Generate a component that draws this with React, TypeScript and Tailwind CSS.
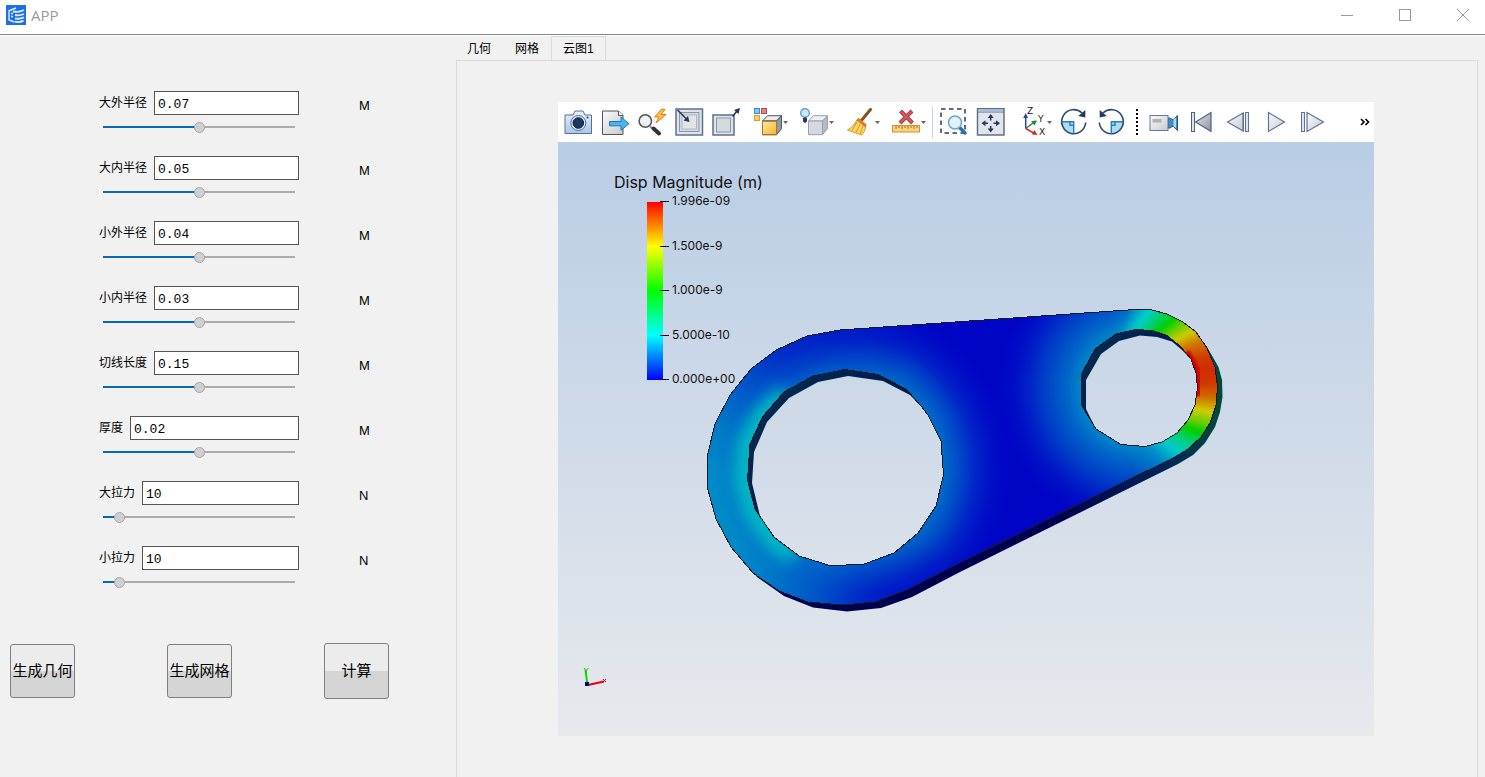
import React, { useState } from "react";

type Field = { id: string; label: string; value: string; unit: string; position: number };

const FIELDS: Field[] = [
  { id: "outer-large", label: "大外半径", value: "0.07", unit: "M", position: 50 },
  { id: "inner-large", label: "大内半径", value: "0.05", unit: "M", position: 50 },
  { id: "outer-small", label: "小外半径", value: "0.04", unit: "M", position: 50 },
  { id: "inner-small", label: "小内半径", value: "0.03", unit: "M", position: 50 },
  { id: "tangent", label: "切线长度", value: "0.15", unit: "M", position: 50 },
  { id: "thickness", label: "厚度", value: "0.02", unit: "M", position: 50 },
  { id: "force-large", label: "大拉力", value: "10", unit: "N", position: 6 },
  { id: "force-small", label: "小拉力", value: "10", unit: "N", position: 6 },
];

function ParameterRow({ field }: { field: Field }) {
  const [text, setText] = useState(field.value);
  const [pos, setPos] = useState(field.position);
  return (
    <div className="flex h-[65px] gap-[60px] pl-[99px]">
      <div className="w-[200px]">
        <div className="flex h-6 items-center gap-[7px]">
          <label htmlFor={field.id} className="shrink-0 text-xs">
            {field.label}
          </label>
          <input
            id={field.id}
            value={text}
            onChange={(e) => setText(e.target.value)}
            className="h-6 min-w-0 flex-1 border border-[#555] bg-white px-[3px] pt-0.5 font-['Liberation_Mono',monospace] text-[13px] outline-none"
          />
        </div>
        <input
          type="range"
          aria-label={field.label}
          min={0}
          max={100}
          value={pos}
          onChange={(e) => setPos(Number(e.target.value))}
          style={{
            backgroundImage: `linear-gradient(to right, #0a68b8 ${pos}%, #ababab ${pos}%)`,
          }}
          className="mx-1 mt-[7px] block h-[11px] w-48 appearance-none bg-[length:100%_2px] bg-[position:0_4px] bg-no-repeat [&::-webkit-slider-thumb]:size-[11px] [&::-webkit-slider-thumb]:appearance-none [&::-webkit-slider-thumb]:rounded-full [&::-webkit-slider-thumb]:border [&::-webkit-slider-thumb]:border-[#a6a6a6] [&::-webkit-slider-thumb]:bg-[#d0d0d0]"
        />
      </div>
      <span className="pt-[5px] text-[13px] leading-5">{field.unit}</span>
    </div>
  );
}

const NAVY = "#26375f";
const STEEL = "#5f6f8c";

const Icon = ({ children }: { children: React.ReactNode }) => (
  <svg viewBox="0 0 28 28" className="h-7 w-7 shrink-0 overflow-visible" fill="none" aria-hidden="true">
    {children}
  </svg>
);

const CameraIcon = () => (
  <Icon>
    <path d="M1 7h8l2-4h8l2 4h6.500v18.500H1z" fill="url(#skyFill)" stroke="#56709a" strokeLinejoin="round" />
    <circle cx="14.300" cy="15" r="7.500" fill="#dfe9f4" stroke="#56709a" />
    <circle cx="14.300" cy="15" r="5.300" fill="#1c3764" stroke="#0f2246" />
    <circle cx="23.500" cy="9.500" r="1" fill="#26375f" />
  </Icon>
);
const ExportIcon = () => (
  <Icon>
    <path d="M1.500 3h16l4.500 4.500V26.500H1.500z" fill="url(#grayFill)" stroke="#555" />
    <path d="M17.500 3v4.500H22" stroke="#555" fill="#fff" />
    <path d="M8.500 13.500H20V9l8 6.700-8 6.600v-4.500H8.500z" fill="#4bb4ea" stroke="#1b78b8" />
  </Icon>
);
const QuickZoomIcon = () => (
  <Icon>
    <path d="M12 18.500l4 3" stroke="#888" strokeWidth="2" />
    <path d="M15.500 20.500l5.500 5" stroke="#333" strokeWidth="4" strokeLinecap="round" />
    <circle cx="7.300" cy="13" r="6.200" fill="#eef1f5" stroke="#555" strokeWidth="1.500" />
    <path d="M24 1l-7.500 8h4.500l-3 6 10-8.500h-5L27 1.500z" fill="#ffc246" stroke="#e07a18" strokeLinejoin="round" />
  </Icon>
);
const FitWindowIcon = () => (
  <Icon>
    <rect x="1" y="1" width="26.500" height="26" fill="#dfe3ea" stroke={STEEL} strokeWidth="1.500" />
    <rect x="4.500" y="4.500" width="19.500" height="19" fill="#d3d6dc" stroke="#8a96aa" />
    <rect x="7" y="7" width="14.500" height="14" fill="#e2e4e8" stroke="#b0b8c6" />
    <path d="M2.500 2l9 9" stroke={NAVY} strokeWidth="1.600" />
    <path d="M14.500 14l-6-1.500 4.500-4.500z" fill={NAVY} />
  </Icon>
);
const ResizeIcon = () => (
  <Icon>
    <rect x="1" y="7" width="21" height="20" fill="#dfe3ea" stroke={STEEL} strokeWidth="1.500" />
    <rect x="4.500" y="10" width="14" height="14" fill="#d6d9de" stroke="#8a96aa" />
    <path d="M20.500 8.500l5-6" stroke={NAVY} strokeWidth="1.600" />
    <path d="M28 0l-1.500 6-4.500-4z" fill={NAVY} />
  </Icon>
);
const Cube = ({ front, top, side, stroke }: { front: string; top: string; side: string; stroke: string }) => (
  <g stroke={stroke} strokeLinejoin="round">
    <path d="M8.500 13l5-5.300h14l-5 5.300z" fill={top} />
    <path d="M22.500 13l5-5.300v13l-5 6z" fill={side} />
    <rect x="8.500" y="13" width="14" height="13.700" fill={front} />
  </g>
);
const ColorCubeIcon = () => (
  <Icon>
    <rect x=".5" y=".5" width="5" height="5" fill="#7ccbf2" stroke="#2f8fcb" />
    <rect x="7.500" y=".5" width="5" height="5" fill="#e0868b" stroke="#b8474f" />
    <rect x=".5" y="7.500" width="5" height="5" fill="#ffcf7a" stroke="#e39a2d" />
    <Cube front="url(#goldFill)" top="#e8ecf2" side="#8d98aa" stroke="#4a5570" />
    <rect x="8.500" y="13" width="14" height="13.700" stroke="#b5761c" />
  </Icon>
);
const LightCubeIcon = () => (
  <Icon>
    <Cube front="#d4d9df" top="#eff1f4" side="#b3bac4" stroke="#98a1ae" />
    <circle cx="5" cy="5" r="4.300" fill="#cfe8f8" stroke="#5d9fd0" strokeWidth="1.400" />
    <path d="M3.500 10h3v3.500l-1.500 1-1.500-1z" fill="#26375f" stroke="#26375f" />
  </Icon>
);
const BroomIcon = () => (
  <Icon>
    <path d="M24.500 1.500L15 13" stroke="#8e4e20" strokeWidth="3" strokeLinecap="round" />
    <path d="M11 11.500c-2 4.500-5 8-9.500 10.500L15.500 27c3-3 4-5.500 4-9z" fill="#ffd765" stroke="#d99425" strokeLinejoin="round" />
    <path d="M11 14L6 22.500M14 16l-4 8.500M17 18l-3 8" stroke="#d99425" />
    <path d="M11.500 11l8.500 7" stroke="#e07a2d" strokeWidth="3" />
  </Icon>
);
const RulerIcon = () => (
  <Icon>
    <path d="M8.500 3l12 12M20 3L8 15" stroke="#a83a40" strokeWidth="4" />
    <path d="M9 3.500l11 11M19.500 3.500l-11 11" stroke="#d4585c" strokeWidth="2" />
    <rect x=".5" y="17.500" width="27" height="6.500" fill="#ffd37d" stroke="#d98f2a" />
    <path d="M4 18v3M7 18v2M10 18v3M13 18v2M16 18v3M19 18v2M22 18v3M25 18v2" stroke="#a9681c" />
  </Icon>
);
const BoxZoomIcon = () => (
  <Icon>
    <rect x="2" y="1" width="24" height="24" stroke={NAVY} strokeWidth="1.500" strokeDasharray="4.500 3.500" />
    <path d="M20.500 19.500l5.500 5.500" stroke="#2a72ae" strokeWidth="3.500" strokeLinecap="round" />
    <circle cx="16" cy="14.500" r="6.500" fill="#e2f2fb" stroke="#6fa3cb" strokeWidth="1.500" />
  </Icon>
);
const PanIcon = () => (
  <Icon>
    <rect x="1.500" y=".7" width="26.500" height="26.300" fill="#e1e4ea" stroke={STEEL} strokeWidth="1.500" />
    <path d="M2 4h26" stroke={STEEL} />
    <rect x="2.500" y="1.500" width="24.500" height="2" fill="#a8c0e0" />
    <path d="M14.700 9v3.500M14.700 18v3.500M8.500 15.300H12M17.500 15.300H21" stroke={NAVY} strokeWidth="1.500" />
    <path d="M14.700 6l3 4h-6zM14.700 24.500l3-4h-6zM5.500 15.300l4-3v6zM24 15.300l-4-3v6z" fill={NAVY} />
  </Icon>
);
const AxesIcon = () => (
  <Icon>
    <path d="M7.700 20.500V9" stroke="#2c44a0" strokeWidth="1.500" />
    <path d="M7.700 5l2.500 5h-5z" fill="#2c44a0" />
    <path d="M7.700 20.500l8-6" stroke="#1e8a3c" strokeWidth="1.500" />
    <path d="M19 12.500l-2.500 5-3.500-4.500z" fill="#1e8a3c" />
    <path d="M7.700 20.500l8 4.500" stroke="#dc2626" strokeWidth="1.500" />
    <path d="M19.500 27l-5.500-.5 2.500-4.500z" fill="#dc2626" />
    <g fill="#222" className="font-['DejaVu_Sans',sans-serif] text-[9px]">
      <text x="9" y="6">Z</text>
      <text x="20" y="14">Y</text>
      <text x="21" y="27">X</text>
    </g>
  </Icon>
);
const Rotate = () => (
  <>
    <path d="M2.700 13.700h12v12a12 12 0 0 1-12-12z" fill="#a8def5" />
    <path d="M23 5A12 12 0 1 0 26.700 14.500" stroke="#2f4775" strokeWidth="1.600" />
    <path d="M2.700 13.700h12v12M11 13.700v3.500h3.700" stroke="#2a7db5" strokeWidth="1.400" />
    <path d="M26.300 2v7.500l-7-1.500z" fill={NAVY} />
  </>
);
const RotateCwIcon = () => (
  <Icon>
    <Rotate />
  </Icon>
);
const RotateCcwIcon = () => (
  <Icon>
    <g transform="matrix(-1 0 0 1 30 0)">
      <Rotate />
    </g>
  </Icon>
);
const VideoIcon = () => (
  <Icon>
    <path d="M19 10h2l3 2 4.500-4.500v15L24 18l-3 2h-2z" fill="#3b8fc4" stroke="#28557f" />
    <path d="M24.500 11l2.500-1v10l-2.500-1.500z" fill="#a9ddf5" />
    <rect x="1" y="7.500" width="18" height="15" fill="url(#grayFill)" stroke="#6678a0" />
    <rect x="3.500" y="11" width="9" height="3.500" fill="#b0b2b6" />
  </Icon>
);
const FirstIcon = () => (
  <Icon>
    <rect x="5.500" y="4.500" width="3" height="19" fill="#dfe3ea" stroke="#4d6188" />
    <path d="M25 4.500v19L9.500 14z" fill="url(#darkFill)" stroke="#4d6188" strokeWidth="1.200" />
  </Icon>
);
const PrevIcon = () => (
  <Icon>
    <path d="M20 5v18L4.500 14z" fill="url(#grayFill)" stroke="#5f719a" strokeWidth="1.200" />
    <rect x="22.500" y="4.500" width="3" height="19" fill="#dfe3ea" stroke="#5f719a" />
    <path d="M20.500 4.500v19" stroke="#5f719a" />
  </Icon>
);
const PlayIcon = () => (
  <Icon>
    <path d="M8.500 4.500v19L24.500 14z" fill="url(#grayFill)" stroke="#5f719a" strokeWidth="1.200" />
  </Icon>
);
const NextIcon = () => (
  <Icon>
    <rect x="4.500" y="4.500" width="3" height="19" fill="#dfe3ea" stroke="#5f719a" />
    <path d="M10 4.500v19L26.500 14z" fill="url(#grayFill)" stroke="#5f719a" strokeWidth="1.200" />
  </Icon>
);

const Tool = ({ name, children }: { name: string; children: React.ReactNode }) => (
  <button type="button" aria-label={name} className="flex h-10 w-[37px] shrink-0 items-center pl-1">
    {children}
  </button>
);
const MenuTool = ({ name, children }: { name: string; children: React.ReactNode }) => (
  <button type="button" aria-label={name} className="flex h-10 w-[46px] shrink-0 items-center gap-px pl-[9px]">
    {children}
    <svg viewBox="0 0 5 3" className="h-[3px] w-[5px] shrink-0" aria-hidden="true">
      <path d="M0 0h5L2.500 3z" fill="#666" />
    </svg>
  </button>
);

function Toolbar() {
  return (
    <div role="toolbar" className="flex h-10 items-center bg-white pr-1 pl-0.5">
      <svg className="absolute h-0 w-0" aria-hidden="true">
        <defs>
          <linearGradient id="skyFill" x2="0" y2="1">
            <stop stopColor="#e9f2fb" />
            <stop offset="1" stopColor="#a9c6e6" />
          </linearGradient>
          <linearGradient id="grayFill" x2="1" y2="1">
            <stop stopColor="#fafafa" />
            <stop offset="1" stopColor="#c6cbd2" />
          </linearGradient>
          <linearGradient id="darkFill" x2="1" y2="1">
            <stop stopColor="#e6e8ec" />
            <stop offset="1" stopColor="#8b919b" />
          </linearGradient>
          <linearGradient id="goldFill" x2="1" y2="1">
            <stop stopColor="#ffe9a6" />
            <stop offset="1" stopColor="#f8b526" />
          </linearGradient>
        </defs>
      </svg>
      <Tool name="截图"><CameraIcon /></Tool>
      <Tool name="导出"><ExportIcon /></Tool>
      <Tool name="快速缩放"><QuickZoomIcon /></Tool>
      <Tool name="适应窗口"><FitWindowIcon /></Tool>
      <Tool name="调整大小"><ResizeIcon /></Tool>
      <MenuTool name="着色"><ColorCubeIcon /></MenuTool>
      <MenuTool name="光照"><LightCubeIcon /></MenuTool>
      <MenuTool name="清除"><BroomIcon /></MenuTool>
      <MenuTool name="删除测量"><RulerIcon /></MenuTool>
      <div className="mr-0.5 ml-[3px] h-8 w-px shrink-0 bg-[#d8d8d8]" />
      <Tool name="框选缩放"><BoxZoomIcon /></Tool>
      <Tool name="平移"><PanIcon /></Tool>
      <MenuTool name="坐标轴"><AxesIcon /></MenuTool>
      <Tool name="顺时针旋转"><RotateCwIcon /></Tool>
      <Tool name="逆时针旋转"><RotateCcwIcon /></Tool>
      <div className="mx-[7px] h-[26px] w-0.5 shrink-0 bg-[repeating-linear-gradient(to_bottom,#000_0px,#000_2px,transparent_2px,transparent_4px)]" />
      <Tool name="动画"><VideoIcon /></Tool>
      <Tool name="第一帧"><FirstIcon /></Tool>
      <Tool name="上一帧"><PrevIcon /></Tool>
      <Tool name="播放"><PlayIcon /></Tool>
      <Tool name="下一帧"><NextIcon /></Tool>
      <button type="button" aria-label="更多" className="ml-auto">
        <svg viewBox="0 0 10 8" className="h-2 w-2.5" fill="none" aria-hidden="true">
          <path d="M1 1l3 3-3 3M5.500 1l3 3-3 3" stroke="#000" strokeWidth="1.600" />
        </svg>
      </button>
    </div>
  );
}

const FACE =
  "M840 330L807 336 776 350 751 369 730 395 715 424 707.500 455 707.500 488 716 519 731 547 753 573 779 591 808 602 843 605 875 602 907 590 960 563 1173 458 1188 449 1201 437 1210 423 1216 405 1217.500 387 1215 367 1207 348 1196 332 1183 322 1167 314 1152 310 1135 309.500Z";
const BODY =
  "M840 335L780 352 735 395 712 455 712 500 735 550 757 577 784 596 813 607.500 847 611.500 881 608 912 597 960 572 1178 464 1193 455 1205 443 1215 427 1220 412 1222.500 397 1222 380 1218.500 367 1207 347 1140 320Z";
const HOLE_A =
  "M845 369.500L878 374.500 906 389 921 406 928 415 941 441 943.500 475 936 506 918 533 894 553 863 564.500 830 565.500 799 556 774 537 755 509 747.500 480 750 444 763 416 784 392 813 376Z";
const OPEN_A =
  "M848 376L883 381 910 395 921 406 928 415 941 441 943.500 475 936 506 918 533 894 553 863 564.500 830 565.500 799 556 774 537 760 516 752 483 754 452 767 422 789 398 818 382Z";
const HOLE_B =
  "M1135 329.500L1152 330.500 1167 335.500 1180 346 1191 359 1196 373 1197.500 388 1195 405 1188 420 1177 433 1162 442 1145 446.500 1121 444.500 1096 429 1082 406 1081.500 374 1095 349 1116 334Z";
const OPEN_B =
  "M1140 335.500L1157 337 1172 341.500 1182 350 1191 359 1196 373 1197.500 388 1195 405 1188 420 1177 433 1162 442 1145 446.500 1121 444.500 1096 429 1086 409 1086 380 1101 354 1119 341Z";

// Colour stops around a bore: [angle in degrees, r, g, b, alpha]
const SMALL_STOPS: number[][] = [
  [-150, 0, 110, 200, 0],
  [-125, 0, 150, 200, 0.2],
  [-104, 0, 208, 200, 1],
  [-90, 0, 208, 110, 1],
  [-78, 0, 206, 0, 1],
  [-67, 110, 206, 0, 1],
  [-57, 208, 204, 0, 1],
  [-46, 208, 125, 0, 1],
  [-30, 208, 60, 0, 1],
  [-18, 208, 45, 0, 1],
  [-4, 208, 58, 0, 1],
  [8, 208, 105, 0, 1],
  [22, 208, 204, 0, 1],
  [33, 110, 206, 0, 1],
  [43, 0, 206, 0, 1],
  [56, 0, 208, 120, 1],
  [70, 0, 205, 200, 1],
  [90, 0, 150, 200, 0.4],
  [125, 0, 110, 200, 0],
];
const LARGE_STOPS: number[][] = [
  [40, 0, 10, 200, 0],
  [75, 0, 28, 200, 0.6],
  [90, 0, 56, 200, 1],
  [105, 0, 90, 200, 1],
  [125, 0, 122, 200, 1],
  [145, 0, 138, 200, 1],
  [180, 0, 138, 200, 1],
  [200, 0, 120, 200, 1],
  [220, 0, 84, 200, 1],
  [240, 0, 46, 200, 1],
  [262, 0, 32, 200, 0.6],
  [300, 0, 20, 200, 0],
];

function colorAt(stops: number[][], angle: number) {
  const i = Math.max(1, stops.findIndex((s) => s[0] >= angle));
  const a = stops[i - 1];
  const b = stops[i];
  const t = (angle - a[0]) / (b[0] - a[0]);
  const v = a.map((n, k) => n + (b[k] - n) * t);
  return `rgba(${Math.round(v[1])},${Math.round(v[2])},${Math.round(v[3])},${v[4].toFixed(3)})`;
}

// Each sector runs from the inner to the outer radius; the scale factors lean its sides.
// Neighbours overlap by a degree so that no seam shows between them.
function sectors(
  stops: number[][],
  cx: number,
  cy: number,
  inner: number,
  outer: number,
  innerScale: number,
  outerScale: number,
) {
  const first = stops[0][0];
  const last = stops[stops.length - 1][0];
  const point = (deg: number, r: number) =>
    `${(cx + r * Math.cos((deg * Math.PI) / 180)).toFixed(1)} ${(cy + r * Math.sin((deg * Math.PI) / 180)).toFixed(1)}`;
  const list: { d: string; fill: string }[] = [];
  for (let a = first; a < last; a += 1) {
    const b = a + 2;
    list.push({
      d: `M${point(a * innerScale, inner)}L${point(a * outerScale, outer)} ${point(b * outerScale, outer)} ${point(b * innerScale, inner)}Z`,
      fill: colorAt(stops, a + 0.5),
    });
  }
  return list;
}

const SMALL_SECTORS = sectors(SMALL_STOPS, 1140, 388, 40, 110, 1.2, 0.72);
const LARGE_SECTORS = sectors(LARGE_STOPS, 845, 467, 80, 160, 1, 1);

const LABELS = [
  { y: 201, text: "1.996e-09" },
  { y: 246, text: "1.500e-9" },
  { y: 290, text: "1.000e-9" },
  { y: 335, text: "5.000e-10" },
  { y: 379, text: "0.000e+00" },
];

function ContourView() {
  return (
    <svg viewBox="558 142 816 594" className="block h-[594px] w-full" role="img" aria-label="Disp Magnitude (m)">
      <defs>
        <filter id="glow" x="-50%" y="-50%" width="200%" height="200%">
          <feGaussianBlur stdDeviation="8" />
        </filter>
        <filter id="blend" colorInterpolationFilters="sRGB">
          <feGaussianBlur stdDeviation="1" />
        </filter>
        <filter id="wide" colorInterpolationFilters="sRGB">
          <feGaussianBlur stdDeviation="5" />
        </filter>
        <radialGradient id="haloA" gradientUnits="userSpaceOnUse" cx="845" cy="467" r="175">
          <stop offset=".55" stopColor="#0060c8" />
          <stop offset=".64" stopColor="#0044c8" />
          <stop offset=".78" stopColor="#0020c8" stopOpacity=".9" />
          <stop offset="1" stopColor="#0000c8" stopOpacity="0" />
        </radialGradient>
        <radialGradient id="rimA" gradientUnits="userSpaceOnUse" cx="845" cy="467" r="130">
          <stop offset=".74" stopColor="#0070c8" stopOpacity=".7" />
          <stop offset="1" stopColor="#0050c8" stopOpacity="0" />
        </radialGradient>
        <radialGradient id="haloB" gradientUnits="userSpaceOnUse" cx="1140" cy="388" r="150">
          <stop offset=".36" stopColor="#0090c8" />
          <stop offset=".48" stopColor="#0068c8" />
          <stop offset=".68" stopColor="#0034c8" />
          <stop offset="1" stopColor="#0000c8" stopOpacity="0" />
        </radialGradient>
        <radialGradient id="fadeB" gradientUnits="userSpaceOnUse" cx="1140" cy="388" r="108">
          <stop offset=".78" stopColor="#fff" />
          <stop offset="1" stopColor="#000" />
        </radialGradient>
        <mask id="fadeMask" maskUnits="userSpaceOnUse" x="1000" y="250" width="260" height="280">
          <rect x="1000" y="250" width="260" height="280" fill="url(#fadeB)" />
        </mask>
        <mask id="faceMask" maskUnits="userSpaceOnUse" x="680" y="290" width="580" height="340">
          <path d={`${FACE}${HOLE_A}${HOLE_B}`} fillRule="evenodd" fill="#fff" />
        </mask>
        <linearGradient id="bodyFill" gradientUnits="userSpaceOnUse" x1="1060" y1="0" x2="1222" y2="0">
          <stop stopColor="#000050" />
          <stop offset=".7" stopColor="#002858" />
          <stop offset="1" stopColor="#004a38" />
        </linearGradient>
        <linearGradient id="wall" x2="1" y2="1">
          <stop stopColor="#003050" />
          <stop offset="1" stopColor="#000050" />
        </linearGradient>
        <linearGradient id="legend" x2="0" y2="1">
          <stop stopColor="#f00" />
          <stop offset=".25" stopColor="#ff0" />
          <stop offset=".5" stopColor="#0f0" />
          <stop offset=".75" stopColor="#0ff" />
          <stop offset="1" stopColor="#00f" />
        </linearGradient>
      </defs>

      <path d={`${BODY}${HOLE_A}${HOLE_B}`} fillRule="evenodd" fill="url(#bodyFill)" />
      <g mask="url(#faceMask)">
        <rect x="680" y="290" width="580" height="340" fill="#0004c4" />
        <circle cx="845" cy="467" r="175" fill="url(#haloA)" />
        <g filter="url(#wide)">
          {LARGE_SECTORS.map((s) => (
            <path key={s.d} d={s.d} fill={s.fill} />
          ))}
        </g>
        <circle cx="845" cy="467" r="130" fill="url(#rimA)" />
        <path
          d="M786 395L763 416 748 444 745 480 754 512 774 539 794 556"
          fill="none"
          stroke="#00c0c4"
          strokeWidth="20"
          filter="url(#glow)"
        />
        <circle cx="1140" cy="388" r="150" fill="url(#haloB)" />
        <g mask="url(#fadeMask)">
          <g filter="url(#blend)">
            {SMALL_SECTORS.map((s) => (
              <path key={s.d} d={s.d} fill={s.fill} />
            ))}
          </g>
        </g>
        <path d="M1186 352L1197 372 1198 396" stroke="#d80000" strokeWidth="8" fill="none" filter="url(#blend)" />
      </g>
      <path d={`${HOLE_A}${OPEN_A}`} fillRule="evenodd" fill="url(#wall)" />
      <path d={`${HOLE_B}${OPEN_B}`} fillRule="evenodd" fill="url(#wall)" />
      <g fill="none" stroke="#161a24" shapeRendering="crispEdges">
        <path d={FACE} />
        <path d={HOLE_A} />
        <path d={HOLE_B} />
      </g>

      <rect x="647" y="202" width="16" height="178" fill="url(#legend)" />
      <g className="font-['Inter',sans-serif]" fill="#111">
        <text x="614" y="188" className="text-[16px]">
          Disp Magnitude (m)
        </text>
        {LABELS.map((l) => (
          <g key={l.text}>
            <rect x="660" y={l.y} width="9" height="1" fill="#000" />
            <text x="672" y={l.y + 4} className="text-[12px]">
              {l.text}
            </text>
          </g>
        ))}
      </g>

      <path d="M587 682L585.500 670" stroke="#00e000" strokeWidth="2" />
      <path d="M588 685L604 681.500" stroke="#f00000" strokeWidth="2" />
      <rect x="585" y="682" width="4" height="4" fill="#000080" />
      <path d="M584 668l2 2.500 2.500-2.500M586 670.500v3" stroke="#00c800" fill="none" />
      <path d="M603 679l3 3M606 679l-3 3" stroke="#d00000" />
    </svg>
  );
}

const TABS = ["几何", "网格", "云图1"];

const AppLogo = () => (
  <svg viewBox="0 0 20 20" className="size-5" aria-hidden="true">
    <rect width="20" height="20" fill="#1a70ea" />
    <path d="M3 6.500v8.500l5.500 2M2.500 6L10 3" stroke="#e4effc" strokeWidth="1.400" fill="none" />
    <path d="M5 8.500h2M5 11.500h2" stroke="#e4effc" strokeWidth="1.500" />
    <path d="M7 6.300c4 1.200 7 .6 11-1.300M9 10c3.500 1 6 .3 9-1M9 13.300c3.500 1 6 .3 9-1M9 16.700c3.500 1 6 .3 8.500-1" stroke="#e4effc" strokeWidth="1.900" fill="none" />
  </svg>
);

export default function App() {
  const [tab, setTab] = useState(2);
  const windowButton = "flex h-[30px] w-11 items-center justify-center";
  return (
    <div className="flex min-h-screen flex-col bg-[#f1f1f1] font-['Liberation_Sans','Noto_Sans_CJK_SC',sans-serif] text-black">
      <header className="flex h-[35px] items-start justify-between border-b border-[#81898d] bg-white pl-1.5">
        <div className="flex h-[30px] items-center gap-[5px]">
          <AppLogo />
          <h1 className="font-['Open_Sans',sans-serif] text-[15px] text-[#999]">APP</h1>
        </div>
        <div className="flex gap-3.5">
          <button type="button" aria-label="最小化" className={windowButton}>
            <span className="h-px w-3 bg-[#999]" />
          </button>
          <button type="button" aria-label="最大化" className={windowButton}>
            <span className="size-3 border border-[#999]" />
          </button>
          <button type="button" aria-label="关闭" className={windowButton}>
            <svg viewBox="0 0 12 12" className="size-3" aria-hidden="true">
              <path d="M0 0l12 12M12 0L0 12" stroke="#999" />
            </svg>
          </button>
        </div>
      </header>

      <main className="flex flex-1 border-t border-white">
        <form className="w-[455px] shrink-0 pt-[55px]" onSubmit={(e) => e.preventDefault()}>
          {FIELDS.map((f) => (
            <ParameterRow key={f.id} field={f} />
          ))}
          <div className="flex items-center gap-[92px] pt-8 pl-2.5 text-[15px]">
            {["生成几何", "生成网格", "计算"].map((label) => (
              <button
                key={label}
                type="button"
                className="h-[54px] w-[65px] rounded-[3px] border border-[#7f7f7f] bg-[linear-gradient(#ececec_50%,#d5d5d5_50%)] whitespace-nowrap last:h-14"
              >
                {label}
              </button>
            ))}
          </div>
        </form>

        <section className="mr-[7px] flex min-w-0 flex-1 flex-col">
          <div role="tablist" className="flex h-6 text-xs">
            {TABS.map((name, i) => (
              <button
                key={name}
                type="button"
                role="tab"
                aria-selected={tab === i}
                onClick={() => setTab(i)}
                className="border border-b-0 border-transparent px-[11px] aria-selected:border-[#dadada]"
              >
                {name}
              </button>
            ))}
          </div>
          <div role="tabpanel" className="ml-px flex-1 border border-b-0 border-[#dadada] pt-[41px] pr-[103px] pb-[41px] pl-[101px]">
            <Toolbar />
            <div className="bg-[linear-gradient(#b9cde5,#e7e9ed)]">
              <ContourView />
            </div>
          </div>
        </section>
      </main>
    </div>
  );
}
